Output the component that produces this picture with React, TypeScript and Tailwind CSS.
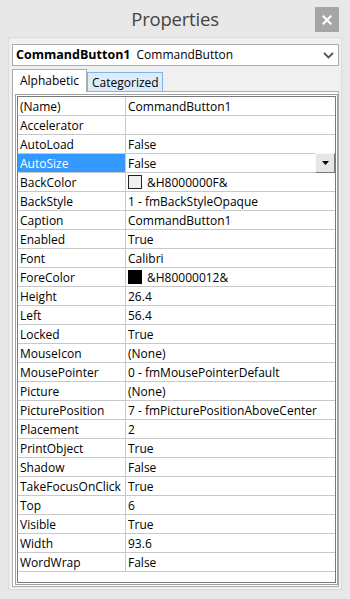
import React from "react";

type Row = { name: string; value: string; swatch?: string; selected?: boolean };

const rows: Row[] = [
  { name: "(Name)", value: "CommandButton1" },
  { name: "Accelerator", value: "" },
  { name: "AutoLoad", value: "False" },
  { name: "AutoSize", value: "False", selected: true },
  { name: "BackColor", value: "&H8000000F&", swatch: "#f0f0f0" },
  { name: "BackStyle", value: "1 - fmBackStyleOpaque" },
  { name: "Caption", value: "CommandButton1" },
  { name: "Enabled", value: "True" },
  { name: "Font", value: "Calibri" },
  { name: "ForeColor", value: "&H80000012&", swatch: "#000000" },
  { name: "Height", value: "26.4" },
  { name: "Left", value: "56.4" },
  { name: "Locked", value: "True" },
  { name: "MouseIcon", value: "(None)" },
  { name: "MousePointer", value: "0 - fmMousePointerDefault" },
  { name: "Picture", value: "(None)" },
  { name: "PicturePosition", value: "7 - fmPicturePositionAboveCenter" },
  { name: "Placement", value: "2" },
  { name: "PrintObject", value: "True" },
  { name: "Shadow", value: "False" },
  { name: "TakeFocusOnClick", value: "True" },
  { name: "Top", value: "6" },
  { name: "Visible", value: "True" },
  { name: "Width", value: "93.6" },
  { name: "WordWrap", value: "False" },
];

export default function App() {
  return (
    <div className="w-[350px] h-[599px] bg-[#e8e8e8] flex flex-col overflow-hidden font-['Open_Sans',sans-serif] text-black">
      {/* Title bar */}
      <div className="h-[37px] shrink-0 grid grid-cols-[1fr_auto_1fr]">
        <div />
        <div className="text-[18.5px] leading-[37px] text-[#444444] tracking-[-0.2px]">Properties</div>
        <div className="flex justify-end items-start">
          <div className="mt-[7px] mr-[11px] w-[24px] h-[25px] bg-[#a6a6a6] flex items-center justify-center">
            <svg width="10" height="10" viewBox="0 0 10 10">
              <path d="M1.5 1.5 L8.5 8.5 M8.5 1.5 L1.5 8.5" stroke="#ffffff" strokeWidth="2.2" strokeLinecap="square" />
            </svg>
          </div>
        </div>
      </div>

      {/* Panel */}
      <div className="flex-1 min-h-0 mx-[8px] mb-[9px] bg-[#f0f0f0] border border-[#dcdcdc] pl-[3px] pr-[2px] pt-[6px] pb-[2px] flex flex-col">
        {/* Object selector */}
        <div className="h-[22px] shrink-0 bg-white border border-[#acacac] flex items-center pl-[3px] pr-[4px] text-[12px]">
          <span className="font-bold text-[12.5px]">CommandButton1</span>
          <span className="ml-[6px]">CommandButton</span>
          <svg className="ml-auto" width="11" height="7" viewBox="0 0 11 7">
            <path d="M1 1 L5.5 5.5 L10 1" fill="none" stroke="#555555" strokeWidth="1.8" />
          </svg>
        </div>

        {/* Tabs */}
        <div className="mt-[3px] h-[22px] shrink-0 flex items-end text-[12px]">
          <div className="relative z-10 -mb-[1px] h-[23px] w-[75px] bg-white border-t border-x border-[#acacac] pl-[7px] leading-[21px]">
            Alphabetic
          </div>
          <div className="h-[19px] w-[76px] bg-[#dcecfc] border-t border-x border-[#7eb4ea] pl-[4px] leading-[19px]">
            Categorized
          </div>
        </div>

        {/* Tab page */}
        <div className="flex-1 min-h-0 bg-white border border-[#acacac] pl-[2px] pt-[2px] pb-[1px] flex flex-col">
          <div className="flex-1 min-h-0 border border-[#a0a0a0] p-[1px] flex flex-col">
            <div className="flex-1 min-h-0 border border-[#7a7a7a] flex flex-col text-[12px]">
              {rows.map((r) => (
                <div key={r.name} className="h-[19px] shrink-0 flex border-b border-[#c8c8c8]">
                  <div
                    className={
                      r.selected
                        ? "w-[108px] shrink-0 border-r border-[#c8c8c8] bg-[#3399ff] text-white pl-[2px] leading-[19px] whitespace-nowrap"
                        : "w-[108px] shrink-0 border-r border-[#c8c8c8] pl-[2px] leading-[19px] whitespace-nowrap"
                    }
                  >
                    {r.name}
                  </div>
                  <div className="flex-1 min-w-0 flex items-center pl-[2px] whitespace-nowrap leading-[19px]">
                    {r.swatch ? (
                      <span
                        className={
                          r.swatch === "#000000"
                            ? "w-[14px] h-[14px] shrink-0 bg-black border border-black"
                            : "w-[14px] h-[14px] shrink-0 bg-[#f0f0f0] border border-[#222222]"
                        }
                      />
                    ) : null}
                    <span className={r.swatch ? "ml-[5px]" : ""}>{r.value}</span>
                    {r.selected ? (
                      <div className="relative z-10 ml-auto w-[20px] h-[20px] shrink-0 bg-[#e6e6e6] border border-t-[#f8f8f8] border-l-[#f8f8f8] border-r-[#7a7a7a] border-b-[#7a7a7a] flex items-center justify-center">
                        <svg width="7" height="4" viewBox="0 0 7 4">
                          <path d="M0 0 L7 0 L3.5 4 Z" fill="#000000" />
                        </svg>
                      </div>
                    ) : null}
                  </div>
                </div>
              ))}
            </div>
          </div>
        </div>
      </div>
    </div>
  );
}
